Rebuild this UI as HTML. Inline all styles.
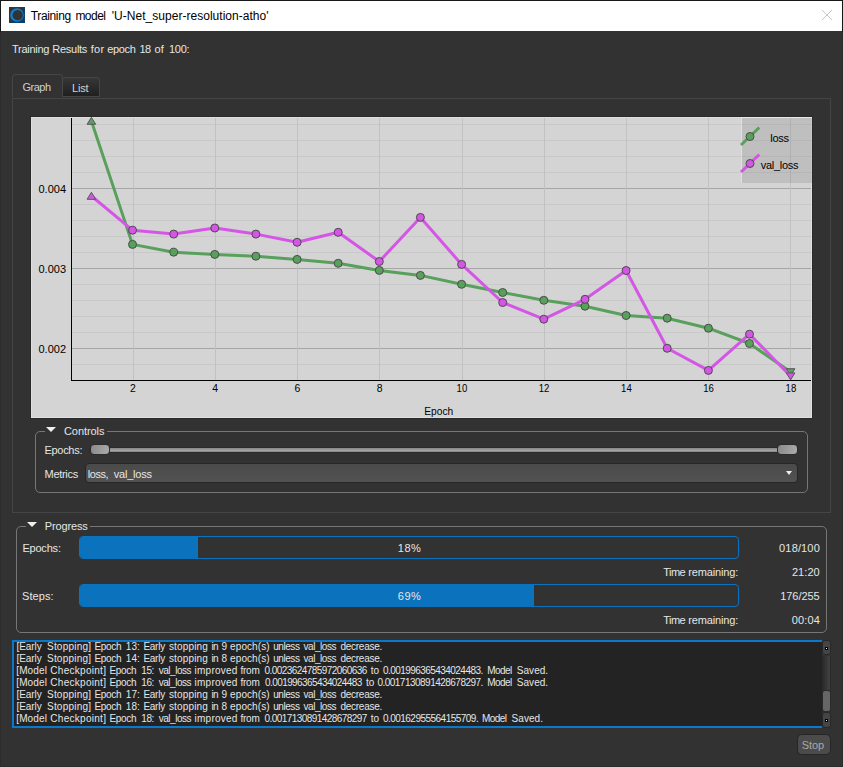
<!DOCTYPE html>
<html><head><meta charset="utf-8"><title>Training model</title>
<style>
html,body{margin:0;padding:0}
body{width:843px;height:767px;overflow:hidden;background:#323232;position:relative;font-family:"Liberation Sans", sans-serif;}
.a{position:absolute;box-sizing:border-box}
.t{position:absolute;white-space:pre;line-height:14px;height:14px}
.gb{position:absolute;box-sizing:border-box;border:1px solid #767676;border-radius:5px}
.mask{position:absolute;background:#323232}
.tri{position:absolute;width:0;height:0;border-left:5px solid transparent;border-right:5px solid transparent;border-top:5px solid #f0f0f0}
</style></head><body>
<!-- window frame -->
<div class="a" style="left:0;top:0;width:843px;height:767px;border:1px solid #2c2c2c"></div>
<div class="a" style="left:0;top:0;width:843px;height:32px;border:1px solid #181818;border-bottom:none"></div>
<div class="a" style="left:1px;top:1px;width:841px;height:30px;background:#fff"></div>
<!-- app icon -->
<svg class="a" style="left:9px;top:7px" width="16" height="16" viewBox="0 0 16 16">
<rect x="0.5" y="0.5" width="15" height="15" fill="#333" stroke="#0b426e"/>
<path fill-rule="evenodd" fill="#0e7fd2" d="M8 1.2a6.8 6.8 0 1 0 0 13.6a6.8 6.8 0 1 0 0-13.6zM8.7 3a5.15 5.15 0 1 1 0 10.3a5.15 5.15 0 1 1 0-10.3z"/>
</svg>
<!-- close x -->
<svg class="a" style="left:821px;top:9px" width="12" height="12" viewBox="0 0 12 12"><path d="M1 1L11 11M11 1L1 11" stroke="#c4c4c4" stroke-width="1" fill="none"/></svg>

<!-- tab pane -->
<div class="a" style="left:12px;top:98px;width:819px;height:415px;border:1px solid #454545"></div>
<!-- tabs -->
<div class="a" style="left:62px;top:77px;width:38px;height:20px;border:1px solid #464646;border-radius:3px 3px 0 0;background:linear-gradient(#363636,#202020)"></div>
<div class="a" style="left:12px;top:74px;width:51px;height:23px;border:1px solid #464646;border-bottom:none;border-radius:4px 4px 0 0;background:#323232"></div>

<svg style="position:absolute;left:0;top:0" width="843" height="767" viewBox="0 0 843 767">
<rect x="30.5" y="116.5" width="782" height="302" fill="none" stroke="#2a2a2a"/>
<rect x="31.5" y="117.5" width="780" height="300" fill="#d4d4d4" stroke="#e0e0e0"/>
<rect x="72" y="124" width="739" height="1" fill="#c9c9c9"/>
<rect x="72" y="140" width="739" height="1" fill="#c9c9c9"/>
<rect x="72" y="156" width="739" height="1" fill="#c9c9c9"/>
<rect x="72" y="172" width="739" height="1" fill="#c9c9c9"/>
<rect x="72" y="188" width="739" height="1" fill="#a6a6a6"/>
<rect x="72" y="204" width="739" height="1" fill="#c9c9c9"/>
<rect x="72" y="220" width="739" height="1" fill="#c9c9c9"/>
<rect x="72" y="236" width="739" height="1" fill="#c9c9c9"/>
<rect x="72" y="252" width="739" height="1" fill="#c9c9c9"/>
<rect x="72" y="268" width="739" height="1" fill="#a6a6a6"/>
<rect x="72" y="284" width="739" height="1" fill="#c9c9c9"/>
<rect x="72" y="300" width="739" height="1" fill="#c9c9c9"/>
<rect x="72" y="316" width="739" height="1" fill="#c9c9c9"/>
<rect x="72" y="332" width="739" height="1" fill="#c9c9c9"/>
<rect x="72" y="348" width="739" height="1" fill="#a6a6a6"/>
<rect x="72" y="364" width="739" height="1" fill="#c9c9c9"/>
<rect x="133" y="118" width="1" height="262" fill="#c1c1c1"/>
<rect x="215" y="118" width="1" height="262" fill="#c1c1c1"/>
<rect x="297" y="118" width="1" height="262" fill="#c1c1c1"/>
<rect x="379" y="118" width="1" height="262" fill="#c1c1c1"/>
<rect x="462" y="118" width="1" height="262" fill="#c1c1c1"/>
<rect x="544" y="118" width="1" height="262" fill="#c1c1c1"/>
<rect x="626" y="118" width="1" height="262" fill="#c1c1c1"/>
<rect x="708" y="118" width="1" height="262" fill="#c1c1c1"/>
<rect x="790" y="118" width="1" height="262" fill="#c1c1c1"/>
<rect x="742" y="118" width="70" height="65" fill="#808080" fill-opacity="0.25"/><rect x="741" y="117" width="71" height="1" fill="#fff" fill-opacity="0.3"/><rect x="741" y="118" width="1" height="65" fill="#fff" fill-opacity="0.3"/>
<rect x="71" y="118" width="1" height="263" fill="#000"/>
<rect x="71" y="380" width="740" height="1" fill="#000"/>
<clipPath id="cp"><rect x="72" y="117" width="740" height="264"/></clipPath>
<polyline points="91.4,121.0 132.5,244.4 173.7,252.2 214.8,254.4 255.9,256.2 297.1,259.4 338.2,263.3 379.3,270.4 420.4,275.4 461.6,284.3 502.7,292.5 543.8,300.3 585.0,306.2 626.1,315.5 667.2,318.2 708.4,328.2 749.5,343.5 790.6,372.0" fill="none" stroke="#58a05c" stroke-width="3" stroke-linejoin="round"/>
<polygon points="91.4,117.3 95.7,124.3 87.1,124.3" fill="#58a05c" stroke="#585858" stroke-width="1"/>
<circle cx="132.5" cy="244.4" r="4" fill="#58a05c" stroke="#4c4c4c" stroke-width="1"/>
<circle cx="173.7" cy="252.2" r="4" fill="#58a05c" stroke="#4c4c4c" stroke-width="1"/>
<circle cx="214.8" cy="254.4" r="4" fill="#58a05c" stroke="#4c4c4c" stroke-width="1"/>
<circle cx="255.9" cy="256.2" r="4" fill="#58a05c" stroke="#4c4c4c" stroke-width="1"/>
<circle cx="297.1" cy="259.4" r="4" fill="#58a05c" stroke="#4c4c4c" stroke-width="1"/>
<circle cx="338.2" cy="263.3" r="4" fill="#58a05c" stroke="#4c4c4c" stroke-width="1"/>
<circle cx="379.3" cy="270.4" r="4" fill="#58a05c" stroke="#4c4c4c" stroke-width="1"/>
<circle cx="420.4" cy="275.4" r="4" fill="#58a05c" stroke="#4c4c4c" stroke-width="1"/>
<circle cx="461.6" cy="284.3" r="4" fill="#58a05c" stroke="#4c4c4c" stroke-width="1"/>
<circle cx="502.7" cy="292.5" r="4" fill="#58a05c" stroke="#4c4c4c" stroke-width="1"/>
<circle cx="543.8" cy="300.3" r="4" fill="#58a05c" stroke="#4c4c4c" stroke-width="1"/>
<circle cx="585.0" cy="306.2" r="4" fill="#58a05c" stroke="#4c4c4c" stroke-width="1"/>
<circle cx="626.1" cy="315.5" r="4" fill="#58a05c" stroke="#4c4c4c" stroke-width="1"/>
<circle cx="667.2" cy="318.2" r="4" fill="#58a05c" stroke="#4c4c4c" stroke-width="1"/>
<circle cx="708.4" cy="328.2" r="4" fill="#58a05c" stroke="#4c4c4c" stroke-width="1"/>
<circle cx="749.5" cy="343.5" r="4" fill="#58a05c" stroke="#4c4c4c" stroke-width="1"/>
<polygon points="790.6,375.7 794.9,368.7 786.3,368.7" fill="#58a05c" stroke="#585858" stroke-width="1"/>
<polyline points="91.4,196.0 132.5,230.2 173.7,234.1 214.8,228.0 255.9,234.1 297.1,242.3 338.2,232.3 379.3,261.5 420.4,217.4 461.6,264.4 502.7,302.5 543.8,319.2 585.0,299.3 626.1,270.5 667.2,348.3 708.4,370.4 749.5,334.2 790.6,376.2" fill="none" stroke="#d455e6" stroke-width="3" stroke-linejoin="round"/>
<polygon points="91.4,192.3 95.7,199.3 87.1,199.3" fill="#d455e6" stroke="#585858" stroke-width="1"/>
<circle cx="132.5" cy="230.2" r="4" fill="#d455e6" stroke="#4c4c4c" stroke-width="1"/>
<circle cx="173.7" cy="234.1" r="4" fill="#d455e6" stroke="#4c4c4c" stroke-width="1"/>
<circle cx="214.8" cy="228.0" r="4" fill="#d455e6" stroke="#4c4c4c" stroke-width="1"/>
<circle cx="255.9" cy="234.1" r="4" fill="#d455e6" stroke="#4c4c4c" stroke-width="1"/>
<circle cx="297.1" cy="242.3" r="4" fill="#d455e6" stroke="#4c4c4c" stroke-width="1"/>
<circle cx="338.2" cy="232.3" r="4" fill="#d455e6" stroke="#4c4c4c" stroke-width="1"/>
<circle cx="379.3" cy="261.5" r="4" fill="#d455e6" stroke="#4c4c4c" stroke-width="1"/>
<circle cx="420.4" cy="217.4" r="4" fill="#d455e6" stroke="#4c4c4c" stroke-width="1"/>
<circle cx="461.6" cy="264.4" r="4" fill="#d455e6" stroke="#4c4c4c" stroke-width="1"/>
<circle cx="502.7" cy="302.5" r="4" fill="#d455e6" stroke="#4c4c4c" stroke-width="1"/>
<circle cx="543.8" cy="319.2" r="4" fill="#d455e6" stroke="#4c4c4c" stroke-width="1"/>
<circle cx="585.0" cy="299.3" r="4" fill="#d455e6" stroke="#4c4c4c" stroke-width="1"/>
<circle cx="626.1" cy="270.5" r="4" fill="#d455e6" stroke="#4c4c4c" stroke-width="1"/>
<circle cx="667.2" cy="348.3" r="4" fill="#d455e6" stroke="#4c4c4c" stroke-width="1"/>
<circle cx="708.4" cy="370.4" r="4" fill="#d455e6" stroke="#4c4c4c" stroke-width="1"/>
<circle cx="749.5" cy="334.2" r="4" fill="#d455e6" stroke="#4c4c4c" stroke-width="1"/>
<polygon points="790.6,379.9 794.9,372.9 786.3,372.9" fill="#d455e6" stroke="#585858" stroke-width="1"/>
<line x1="741" y1="145.0" x2="759.3" y2="127.5" stroke="#58a05c" stroke-width="3"/>
<circle cx="750" cy="136.5" r="4" fill="#58a05c" stroke="#4c4c4c"/>
<line x1="741" y1="172.0" x2="759.3" y2="154.5" stroke="#d455e6" stroke-width="3"/>
<circle cx="750" cy="163.5" r="4" fill="#d455e6" stroke="#4c4c4c"/>
<text transform="translate(132.8,392) scale(0.95,1)" x="0" y="0" text-anchor="middle" style="font-family:&quot;Liberation Sans&quot;,sans-serif;font-size:11px;fill:#000">2</text>
<text transform="translate(215.1,392) scale(0.95,1)" x="0" y="0" text-anchor="middle" style="font-family:&quot;Liberation Sans&quot;,sans-serif;font-size:11px;fill:#000">4</text>
<text transform="translate(297.4,392) scale(0.95,1)" x="0" y="0" text-anchor="middle" style="font-family:&quot;Liberation Sans&quot;,sans-serif;font-size:11px;fill:#000">6</text>
<text transform="translate(379.6,392) scale(0.95,1)" x="0" y="0" text-anchor="middle" style="font-family:&quot;Liberation Sans&quot;,sans-serif;font-size:11px;fill:#000">8</text>
<text transform="translate(461.9,392) scale(0.87,1)" x="0" y="0" text-anchor="middle" style="font-family:&quot;Liberation Sans&quot;,sans-serif;font-size:11px;fill:#000">10</text>
<text transform="translate(544.1,392) scale(0.87,1)" x="0" y="0" text-anchor="middle" style="font-family:&quot;Liberation Sans&quot;,sans-serif;font-size:11px;fill:#000">12</text>
<text transform="translate(626.4,392) scale(0.87,1)" x="0" y="0" text-anchor="middle" style="font-family:&quot;Liberation Sans&quot;,sans-serif;font-size:11px;fill:#000">14</text>
<text transform="translate(708.6,392) scale(0.87,1)" x="0" y="0" text-anchor="middle" style="font-family:&quot;Liberation Sans&quot;,sans-serif;font-size:11px;fill:#000">16</text>
<text transform="translate(790.9,392) scale(0.87,1)" x="0" y="0" text-anchor="middle" style="font-family:&quot;Liberation Sans&quot;,sans-serif;font-size:11px;fill:#000">18</text>
<text x="66" y="193" text-anchor="end" style="font-family:&quot;Liberation Sans&quot;,sans-serif;font-size:11px;fill:#000">0.004</text>
<text x="66" y="273" text-anchor="end" style="font-family:&quot;Liberation Sans&quot;,sans-serif;font-size:11px;fill:#000">0.003</text>
<text x="66" y="353" text-anchor="end" style="font-family:&quot;Liberation Sans&quot;,sans-serif;font-size:11px;fill:#000">0.002</text>
<text transform="translate(438.7,415) scale(0.93,1)" x="0" y="0" text-anchor="middle" style="font-family:&quot;Liberation Sans&quot;,sans-serif;font-size:11px;fill:#000">Epoch</text>
<text x="779.5" y="142" text-anchor="middle" style="font-family:&quot;Liberation Sans&quot;,sans-serif;font-size:11px;fill:#000;letter-spacing:-0.3px">loss</text>
<text x="779.5" y="169" text-anchor="middle" style="font-family:&quot;Liberation Sans&quot;,sans-serif;font-size:11px;fill:#000;letter-spacing:-0.28px">val_loss</text>
</svg>

<!-- Controls group -->
<div class="gb" style="left:35px;top:431px;width:773px;height:62px"></div>
<div class="mask" style="left:45px;top:426px;width:62px;height:10px"></div>
<div class="tri" style="left:46px;top:427px"></div>
<!-- slider -->
<div class="a" style="left:89px;top:447px;width:709px;height:6px;border-radius:3px;border:1px solid #2b2b2b;background:linear-gradient(#868686 0%,#a6a6a6 70%,#7c7c7c 100%)"></div>
<div class="a" style="left:90px;top:444px;width:20px;height:11px;border-radius:4px;border:1px solid #2b2b2b;background:linear-gradient(100deg,#8a8a8a,#ababab)"></div>
<div class="a" style="left:777px;top:444px;width:21px;height:11px;border-radius:4px;border:1px solid #2b2b2b;background:linear-gradient(100deg,#8a8a8a,#ababab)"></div>
<!-- combo -->
<div class="a" style="left:85px;top:463px;width:713px;height:20px;border-radius:4px;border:1px solid #262626;background:linear-gradient(#4a4a4a,#525252)"></div>
<div class="tri" style="left:786px;top:471px;border-left-width:3.5px;border-right-width:3.5px;border-top-width:4px"></div>

<!-- Progress group -->
<div class="gb" style="left:16px;top:526px;width:811px;height:107px"></div>
<div class="mask" style="left:26px;top:521px;width:64px;height:10px"></div>
<div class="tri" style="left:27px;top:522px"></div>
<div class="a" style="left:79px;top:536px;width:660px;height:23px;border:1px solid #0b72be;border-radius:4px;overflow:hidden"><div style="width:118px;height:100%;background:#0b72be"></div></div>
<div class="a" style="left:79px;top:584px;width:660px;height:23px;border:1px solid #0b72be;border-radius:4px;overflow:hidden"><div style="width:454px;height:100%;background:#0b72be"></div></div>

<!-- log -->
<div class="a" style="left:12px;top:640px;width:810px;height:88px;border:2px solid #0a79cc;border-right:none;background:#232323"></div>
<div class="a" style="left:822px;top:656px;width:9px;height:56px;border:1px solid #2a2a2a;border-width:0 1px;background:linear-gradient(90deg,#2b2b2b,#424242)"></div>
<div class="a" style="left:822px;top:640px;width:9px;height:15px;border-radius:3px;border:1px solid #282828;background:#454545"></div>
<div class="a" style="left:822px;top:712px;width:9px;height:16px;border-radius:3px;border:1px solid #282828;background:#454545"></div>
<div class="a" style="left:825px;top:647px;width:3px;height:3px;border:1px solid #000;background:#fff"></div>
<div class="a" style="left:825px;top:719px;width:3px;height:3px;border:1px solid #000;background:#fff"></div>
<div class="a" style="left:822px;top:690px;width:9px;height:22px;border-radius:3px;border:1px solid #2a2a2a;background:#666"></div>

<!-- stop -->
<div class="a" style="left:797px;top:734px;width:34px;height:21px;border-radius:5px;border:1px solid #262626;background:#4b4b4b"></div>

<div class="t" style="left:30.8px;top:8.5px;font-size:12px;color:#000;letter-spacing:-0.371px">Training </div>
<div class="t" style="left:75.4px;top:8.5px;font-size:12px;color:#000;letter-spacing:-0.525px">model </div>
<div class="t" style="left:111.8px;top:8.5px;font-size:12px;color:#000;letter-spacing:0.025px">'U-Net_super-resolution-atho'</div>
<div class="t" style="left:12.1px;top:42.0px;font-size:11px;color:#e6e6e6;letter-spacing:-0.3px">Training </div>
<div class="t" style="left:52.3px;top:42.0px;font-size:11px;color:#e6e6e6;letter-spacing:-0.267px">Results </div>
<div class="t" style="left:90.8px;top:42.0px;font-size:11px;color:#e6e6e6;letter-spacing:0.25px">for </div>
<div class="t" style="left:107.3px;top:42.0px;font-size:11px;color:#e6e6e6;letter-spacing:-0.35px">epoch </div>
<div class="t" style="left:139.6px;top:42.0px;font-size:11px;color:#e6e6e6;letter-spacing:-0.6px">18 </div>
<div class="t" style="left:154.6px;top:42.0px;font-size:11px;color:#e6e6e6;letter-spacing:0.1px">of </div>
<div class="t" style="left:169.0px;top:42.0px;font-size:11px;color:#e6e6e6;letter-spacing:-0.3px">100:</div>
<div class="t" style="left:22.5px;top:80.0px;font-size:11px;color:#d0d0d0;letter-spacing:-0.5px">Graph</div>
<div class="t" style="left:72.0px;top:80.5px;font-size:11px;color:#d4d4d4;letter-spacing:-0.167px">List</div>
<div class="t" style="left:64.0px;top:424.0px;font-size:11px;color:#e6e6e6;letter-spacing:-0.071px">Controls</div>
<div class="t" style="left:44.5px;top:443.0px;font-size:11px;color:#e6e6e6;letter-spacing:-0.3px">Epochs:</div>
<div class="t" style="left:44.5px;top:467.0px;font-size:11px;color:#e6e6e6;letter-spacing:-0.283px">Metrics</div>
<div class="t" style="left:87.8px;top:467.0px;font-size:11px;color:#e6e6e6;letter-spacing:-0.475px">loss, </div>
<div class="t" style="left:113.8px;top:467.0px;font-size:11px;color:#e6e6e6;letter-spacing:-0.229px">val_loss</div>
<div class="t" style="left:44.8px;top:519.0px;font-size:11px;color:#e6e6e6;letter-spacing:-0.143px">Progress</div>
<div class="t" style="left:22.4px;top:541.0px;font-size:11px;color:#e6e6e6;letter-spacing:-0.2px">Epochs:</div>
<div class="t" style="left:22.1px;top:589.0px;font-size:11px;color:#e6e6e6;letter-spacing:0.06px">Steps:</div>
<div class="t" style="left:397.8px;top:541.0px;font-size:11px;color:#e6e6e6;letter-spacing:0.5px">18%</div>
<div class="t" style="left:397.8px;top:589.0px;font-size:11px;color:#e6e6e6;letter-spacing:0.5px">69%</div>
<div class="t" style="left:779.1px;top:541.0px;font-size:11px;color:#e6e6e6;letter-spacing:0.15px">018/100</div>
<div class="t" style="left:791.9px;top:565.0px;font-size:11px;color:#e6e6e6;letter-spacing:0.075px">21:20</div>
<div class="t" style="left:780.2px;top:589.0px;font-size:11px;color:#e6e6e6;letter-spacing:-0.05px">176/255</div>
<div class="t" style="left:791.8px;top:613.0px;font-size:11px;color:#e6e6e6;letter-spacing:0.125px">00:04</div>
<div class="t" style="left:663.3px;top:565.0px;font-size:11px;color:#e6e6e6;letter-spacing:-0.567px">Time </div>
<div class="t" style="left:688.2px;top:565.0px;font-size:11px;color:#e6e6e6;letter-spacing:-0.133px">remaining:</div>
<div class="t" style="left:663.3px;top:613.0px;font-size:11px;color:#e6e6e6;letter-spacing:-0.567px">Time </div>
<div class="t" style="left:688.2px;top:613.0px;font-size:11px;color:#e6e6e6;letter-spacing:-0.133px">remaining:</div>
<div class="t" style="left:801.8px;top:738.0px;font-size:11px;color:#a8a8a8;letter-spacing:-0.1px">Stop</div>
<div class="t" style="left:16.6px;top:640.0px;font-size:10px;color:#e6e6e6;letter-spacing:-0.1px">[Early </div>
<div class="t" style="left:47.0px;top:640.0px;font-size:10px;color:#e6e6e6;letter-spacing:0.212px">Stopping] </div>
<div class="t" style="left:94.4px;top:640.0px;font-size:10px;color:#e6e6e6;letter-spacing:-0.275px">Epoch </div>
<div class="t" style="left:125.7px;top:640.0px;font-size:10px;color:#e6e6e6;letter-spacing:0.15px">13: </div>
<div class="t" style="left:143.4px;top:640.0px;font-size:10px;color:#e6e6e6;letter-spacing:-0.25px">Early </div>
<div class="t" style="left:168.9px;top:640.0px;font-size:10px;color:#e6e6e6;letter-spacing:0.171px">stopping </div>
<div class="t" style="left:211.5px;top:640.0px;font-size:10px;color:#e6e6e6;letter-spacing:-0.6px">in </div>
<div class="t" style="left:221.4px;top:640.0px;font-size:10px;color:#e6e6e6;letter-spacing:-0.6px">9 </div>
<div class="t" style="left:230.1px;top:640.0px;font-size:10px;color:#e6e6e6;letter-spacing:0.086px">epoch(s) </div>
<div class="t" style="left:273.2px;top:640.0px;font-size:10px;color:#e6e6e6;letter-spacing:-0.44px">unless </div>
<div class="t" style="left:303.6px;top:640.0px;font-size:10px;color:#e6e6e6;letter-spacing:-0.471px">val_loss </div>
<div class="t" style="left:340.4px;top:640.0px;font-size:10px;color:#e6e6e6;letter-spacing:-0.25px">decrease.</div>
<div class="t" style="left:16.6px;top:652.0px;font-size:10px;color:#e6e6e6;letter-spacing:-0.1px">[Early </div>
<div class="t" style="left:47.0px;top:652.0px;font-size:10px;color:#e6e6e6;letter-spacing:0.212px">Stopping] </div>
<div class="t" style="left:94.4px;top:652.0px;font-size:10px;color:#e6e6e6;letter-spacing:-0.275px">Epoch </div>
<div class="t" style="left:125.7px;top:652.0px;font-size:10px;color:#e6e6e6;letter-spacing:0.15px">14: </div>
<div class="t" style="left:143.4px;top:652.0px;font-size:10px;color:#e6e6e6;letter-spacing:-0.25px">Early </div>
<div class="t" style="left:168.9px;top:652.0px;font-size:10px;color:#e6e6e6;letter-spacing:0.171px">stopping </div>
<div class="t" style="left:211.5px;top:652.0px;font-size:10px;color:#e6e6e6;letter-spacing:-0.6px">in </div>
<div class="t" style="left:221.4px;top:652.0px;font-size:10px;color:#e6e6e6;letter-spacing:-0.6px">8 </div>
<div class="t" style="left:230.1px;top:652.0px;font-size:10px;color:#e6e6e6;letter-spacing:0.086px">epoch(s) </div>
<div class="t" style="left:273.2px;top:652.0px;font-size:10px;color:#e6e6e6;letter-spacing:-0.44px">unless </div>
<div class="t" style="left:303.6px;top:652.0px;font-size:10px;color:#e6e6e6;letter-spacing:-0.471px">val_loss </div>
<div class="t" style="left:340.4px;top:652.0px;font-size:10px;color:#e6e6e6;letter-spacing:-0.25px">decrease.</div>
<div class="t" style="left:16.2px;top:664.0px;font-size:10px;color:#e6e6e6;letter-spacing:0.16px">[Model </div>
<div class="t" style="left:50.3px;top:664.0px;font-size:10px;color:#e6e6e6;letter-spacing:0.28px">Checkpoint] </div>
<div class="t" style="left:109.4px;top:664.0px;font-size:10px;color:#e6e6e6;letter-spacing:-0.275px">Epoch </div>
<div class="t" style="left:141.2px;top:664.0px;font-size:10px;color:#e6e6e6;letter-spacing:-0.35px">15: </div>
<div class="t" style="left:158.7px;top:664.0px;font-size:10px;color:#e6e6e6;letter-spacing:-0.471px">val_loss </div>
<div class="t" style="left:194.6px;top:664.0px;font-size:10px;color:#e6e6e6;letter-spacing:0.229px">improved </div>
<div class="t" style="left:240.4px;top:664.0px;font-size:10px;color:#e6e6e6;letter-spacing:-0.2px">from </div>
<div class="t" style="left:264.6px;top:664.0px;font-size:10px;color:#e6e6e6;letter-spacing:-0.57px">0.0023624785972060636 </div>
<div class="t" style="left:370.8px;top:664.0px;font-size:10px;color:#e6e6e6;letter-spacing:-0.1px">to </div>
<div class="t" style="left:382.9px;top:664.0px;font-size:10px;color:#e6e6e6;letter-spacing:-0.545px">0.001996365434024483. </div>
<div class="t" style="left:487.3px;top:664.0px;font-size:10px;color:#e6e6e6;letter-spacing:-0.6px">Model </div>
<div class="t" style="left:516.8px;top:664.0px;font-size:10px;color:#e6e6e6;letter-spacing:0.04px">Saved.</div>
<div class="t" style="left:16.2px;top:676.0px;font-size:10px;color:#e6e6e6;letter-spacing:0.16px">[Model </div>
<div class="t" style="left:50.3px;top:676.0px;font-size:10px;color:#e6e6e6;letter-spacing:0.28px">Checkpoint] </div>
<div class="t" style="left:109.4px;top:676.0px;font-size:10px;color:#e6e6e6;letter-spacing:-0.275px">Epoch </div>
<div class="t" style="left:141.2px;top:676.0px;font-size:10px;color:#e6e6e6;letter-spacing:-0.35px">16: </div>
<div class="t" style="left:158.7px;top:676.0px;font-size:10px;color:#e6e6e6;letter-spacing:-0.471px">val_loss </div>
<div class="t" style="left:194.6px;top:676.0px;font-size:10px;color:#e6e6e6;letter-spacing:0.229px">improved </div>
<div class="t" style="left:240.4px;top:676.0px;font-size:10px;color:#e6e6e6;letter-spacing:-0.2px">from </div>
<div class="t" style="left:265.1px;top:676.0px;font-size:10px;color:#e6e6e6;letter-spacing:-0.595px">0.001996365434024483 </div>
<div class="t" style="left:366.1px;top:676.0px;font-size:10px;color:#e6e6e6;letter-spacing:-0.2px">to </div>
<div class="t" style="left:377.4px;top:676.0px;font-size:10px;color:#e6e6e6;letter-spacing:-0.514px">0.0017130891428678297. </div>
<div class="t" style="left:487.3px;top:676.0px;font-size:10px;color:#e6e6e6;letter-spacing:-0.6px">Model </div>
<div class="t" style="left:516.8px;top:676.0px;font-size:10px;color:#e6e6e6;letter-spacing:0.04px">Saved.</div>
<div class="t" style="left:16.6px;top:688.0px;font-size:10px;color:#e6e6e6;letter-spacing:-0.1px">[Early </div>
<div class="t" style="left:47.0px;top:688.0px;font-size:10px;color:#e6e6e6;letter-spacing:0.212px">Stopping] </div>
<div class="t" style="left:94.4px;top:688.0px;font-size:10px;color:#e6e6e6;letter-spacing:-0.275px">Epoch </div>
<div class="t" style="left:125.7px;top:688.0px;font-size:10px;color:#e6e6e6;letter-spacing:0.15px">17: </div>
<div class="t" style="left:143.4px;top:688.0px;font-size:10px;color:#e6e6e6;letter-spacing:-0.25px">Early </div>
<div class="t" style="left:168.9px;top:688.0px;font-size:10px;color:#e6e6e6;letter-spacing:0.171px">stopping </div>
<div class="t" style="left:211.5px;top:688.0px;font-size:10px;color:#e6e6e6;letter-spacing:-0.6px">in </div>
<div class="t" style="left:221.4px;top:688.0px;font-size:10px;color:#e6e6e6;letter-spacing:-0.6px">9 </div>
<div class="t" style="left:230.1px;top:688.0px;font-size:10px;color:#e6e6e6;letter-spacing:0.086px">epoch(s) </div>
<div class="t" style="left:273.2px;top:688.0px;font-size:10px;color:#e6e6e6;letter-spacing:-0.44px">unless </div>
<div class="t" style="left:303.6px;top:688.0px;font-size:10px;color:#e6e6e6;letter-spacing:-0.471px">val_loss </div>
<div class="t" style="left:340.4px;top:688.0px;font-size:10px;color:#e6e6e6;letter-spacing:-0.25px">decrease.</div>
<div class="t" style="left:16.6px;top:700.0px;font-size:10px;color:#e6e6e6;letter-spacing:-0.1px">[Early </div>
<div class="t" style="left:47.0px;top:700.0px;font-size:10px;color:#e6e6e6;letter-spacing:0.212px">Stopping] </div>
<div class="t" style="left:94.4px;top:700.0px;font-size:10px;color:#e6e6e6;letter-spacing:-0.275px">Epoch </div>
<div class="t" style="left:125.7px;top:700.0px;font-size:10px;color:#e6e6e6;letter-spacing:0.15px">18: </div>
<div class="t" style="left:143.4px;top:700.0px;font-size:10px;color:#e6e6e6;letter-spacing:-0.25px">Early </div>
<div class="t" style="left:168.9px;top:700.0px;font-size:10px;color:#e6e6e6;letter-spacing:0.171px">stopping </div>
<div class="t" style="left:211.5px;top:700.0px;font-size:10px;color:#e6e6e6;letter-spacing:-0.6px">in </div>
<div class="t" style="left:221.4px;top:700.0px;font-size:10px;color:#e6e6e6;letter-spacing:-0.6px">8 </div>
<div class="t" style="left:230.1px;top:700.0px;font-size:10px;color:#e6e6e6;letter-spacing:0.086px">epoch(s) </div>
<div class="t" style="left:273.2px;top:700.0px;font-size:10px;color:#e6e6e6;letter-spacing:-0.44px">unless </div>
<div class="t" style="left:303.6px;top:700.0px;font-size:10px;color:#e6e6e6;letter-spacing:-0.471px">val_loss </div>
<div class="t" style="left:340.4px;top:700.0px;font-size:10px;color:#e6e6e6;letter-spacing:-0.25px">decrease.</div>
<div class="t" style="left:16.2px;top:712.0px;font-size:10px;color:#e6e6e6;letter-spacing:0.16px">[Model </div>
<div class="t" style="left:50.3px;top:712.0px;font-size:10px;color:#e6e6e6;letter-spacing:0.28px">Checkpoint] </div>
<div class="t" style="left:109.4px;top:712.0px;font-size:10px;color:#e6e6e6;letter-spacing:-0.275px">Epoch </div>
<div class="t" style="left:141.2px;top:712.0px;font-size:10px;color:#e6e6e6;letter-spacing:-0.35px">18: </div>
<div class="t" style="left:158.7px;top:712.0px;font-size:10px;color:#e6e6e6;letter-spacing:-0.471px">val_loss </div>
<div class="t" style="left:194.6px;top:712.0px;font-size:10px;color:#e6e6e6;letter-spacing:0.229px">improved </div>
<div class="t" style="left:240.4px;top:712.0px;font-size:10px;color:#e6e6e6;letter-spacing:-0.2px">from </div>
<div class="t" style="left:264.6px;top:712.0px;font-size:10px;color:#e6e6e6;letter-spacing:-0.57px">0.0017130891428678297 </div>
<div class="t" style="left:370.8px;top:712.0px;font-size:10px;color:#e6e6e6;letter-spacing:-0.1px">to </div>
<div class="t" style="left:382.9px;top:712.0px;font-size:10px;color:#e6e6e6;letter-spacing:-0.521px">0.00162955564155709. </div>
<div class="t" style="left:482.1px;top:712.0px;font-size:10px;color:#e6e6e6;letter-spacing:-0.6px">Model </div>
<div class="t" style="left:511.5px;top:712.0px;font-size:10px;color:#e6e6e6;letter-spacing:0.08px">Saved.</div>
</body></html>
